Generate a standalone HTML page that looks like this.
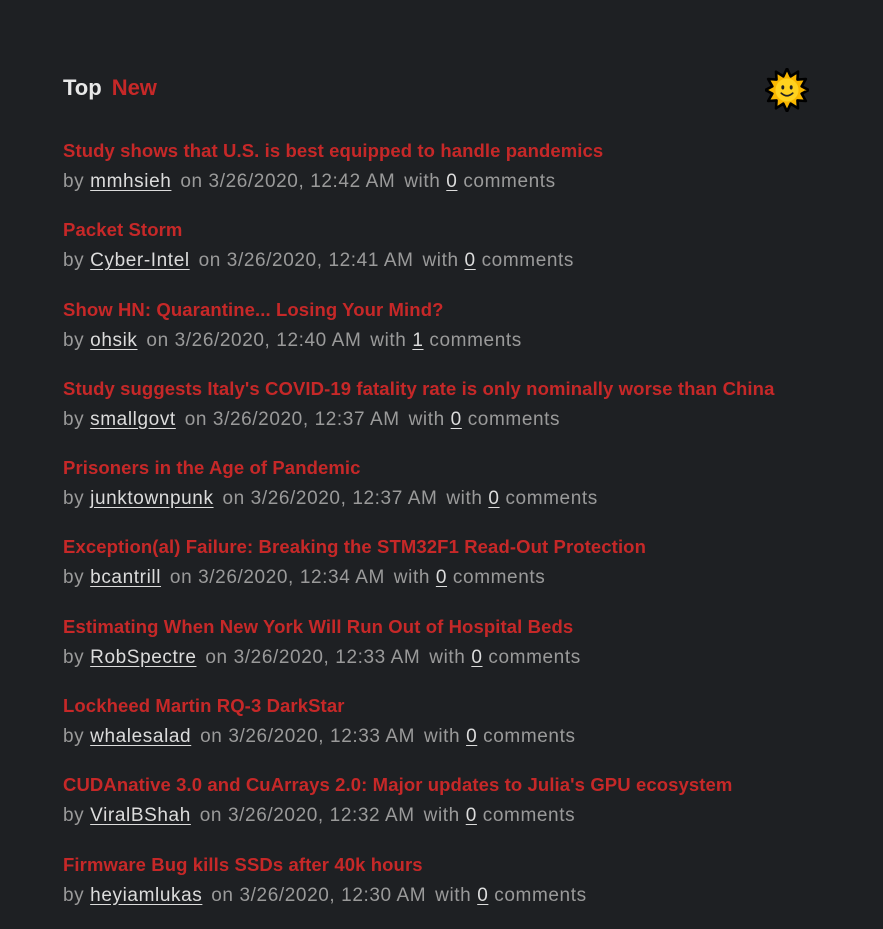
<!DOCTYPE html>
<html><head><meta charset="utf-8"><style>
html,body{margin:0;padding:0;background:#1e2023;width:883px;height:921px;overflow:hidden;font-family:"Liberation Sans",Arial,sans-serif;}
.hdr{position:absolute;left:63px;top:73px;font-size:22px;font-weight:bold;line-height:30px;}
.hdr .t{color:#e8e8e8;}
.hdr .n{color:#c62828;margin-left:10px;}
.sun{position:absolute;left:765px;top:68px;width:44px;height:44px;}
.list{position:absolute;left:63px;top:136px;}
.it{height:79.3px;}
.ti{color:#c62828;font-weight:bold;font-size:18.5px;line-height:30px;white-space:nowrap;letter-spacing:0.1px;}
.me{color:#9a9a9a;font-size:19px;line-height:31px;white-space:nowrap;letter-spacing:0.6px;}
.me u{color:#dcdcdc;text-decoration:underline;text-underline-offset:3px;}
.me .s{margin-left:3px;}
</style></head><body>
<div class="hdr"><span class="t">Top</span><span class="n">New</span></div>
<svg class="sun" viewBox="0 0 42 42">
<polygon points="21,0.5 24.5,8 31.5,3.5 31,11 39,10.5 35,17.5 41.5,21 35,24.5 39,31.5 31,31 31.5,38.5 24.5,34 21,41.5 17.5,34 10.5,38.5 11,31 3,31.5 7,24.5 0.5,21 7,17.5 3,10.5 11,11 10.5,3.5 17.5,8" fill="#f9b700" stroke="#000" stroke-width="2.5" stroke-linejoin="round"/>
<circle cx="21" cy="21" r="11" fill="#ffd21f"/>
<ellipse cx="17" cy="18.5" rx="1.4" ry="2" fill="#222"/>
<ellipse cx="25" cy="18.5" rx="1.4" ry="2" fill="#222"/>
<path d="M15.5 24 Q21 29 26.5 24" stroke="#222" stroke-width="1.6" fill="none" stroke-linecap="round"/>
</svg>
<div class="list">
<div class="it"><div class="ti">Study shows that U.S. is best equipped to handle pandemics</div><div class="me">by <u>mmhsieh</u> <span class="s">on 3/26/2020, 12:42 AM</span> <span class="s">with <u>0</u> comments</span></div></div>
<div class="it"><div class="ti">Packet Storm</div><div class="me">by <u>Cyber-Intel</u> <span class="s">on 3/26/2020, 12:41 AM</span> <span class="s">with <u>0</u> comments</span></div></div>
<div class="it"><div class="ti">Show HN: Quarantine... Losing Your Mind?</div><div class="me">by <u>ohsik</u> <span class="s">on 3/26/2020, 12:40 AM</span> <span class="s">with <u>1</u> comments</span></div></div>
<div class="it"><div class="ti">Study suggests Italy's COVID-19 fatality rate is only nominally worse than China</div><div class="me">by <u>smallgovt</u> <span class="s">on 3/26/2020, 12:37 AM</span> <span class="s">with <u>0</u> comments</span></div></div>
<div class="it"><div class="ti">Prisoners in the Age of Pandemic</div><div class="me">by <u>junktownpunk</u> <span class="s">on 3/26/2020, 12:37 AM</span> <span class="s">with <u>0</u> comments</span></div></div>
<div class="it"><div class="ti">Exception(al) Failure: Breaking the STM32F1 Read-Out Protection</div><div class="me">by <u>bcantrill</u> <span class="s">on 3/26/2020, 12:34 AM</span> <span class="s">with <u>0</u> comments</span></div></div>
<div class="it"><div class="ti">Estimating When New York Will Run Out of Hospital Beds</div><div class="me">by <u>RobSpectre</u> <span class="s">on 3/26/2020, 12:33 AM</span> <span class="s">with <u>0</u> comments</span></div></div>
<div class="it"><div class="ti">Lockheed Martin RQ-3 DarkStar</div><div class="me">by <u>whalesalad</u> <span class="s">on 3/26/2020, 12:33 AM</span> <span class="s">with <u>0</u> comments</span></div></div>
<div class="it"><div class="ti">CUDAnative 3.0 and CuArrays 2.0: Major updates to Julia's GPU ecosystem</div><div class="me">by <u>ViralBShah</u> <span class="s">on 3/26/2020, 12:32 AM</span> <span class="s">with <u>0</u> comments</span></div></div>
<div class="it"><div class="ti">Firmware Bug kills SSDs after 40k hours</div><div class="me">by <u>heyiamlukas</u> <span class="s">on 3/26/2020, 12:30 AM</span> <span class="s">with <u>0</u> comments</span></div></div>
</div>
</body></html>
